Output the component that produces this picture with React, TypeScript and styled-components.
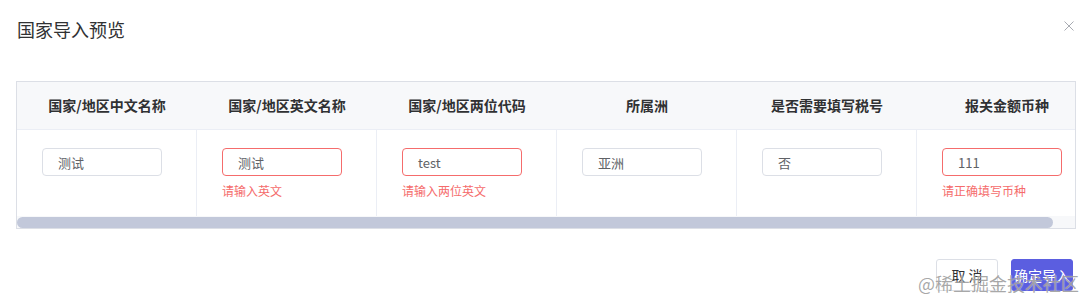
import React from "react";
import styled, { createGlobalStyle } from "styled-components";

const Global = createGlobalStyle`
  html, body { margin: 0; padding: 0; background: #fff; }
  body { font-family: "Noto Sans CJK SC", "Noto Sans", sans-serif; }
  * { box-sizing: border-box; }
`;

const Dialog = styled.div`
  position: relative;
  width: 1092px;
  height: 306px;
  padding: 0 16px;
  background: #fff;
  overflow: hidden;
`;

const Header = styled.div`
  height: 58px;
  display: flex;
  align-items: center;
  justify-content: space-between;
`;

const Title = styled.div`
  font-size: 18px;
  color: #303133;
  padding-left: 1px;
`;

const Close = styled.button`
  border: 0;
  background: none;
  padding: 0;
  margin-right: 2px;
  margin-top: -6px;
  width: 10px;
  height: 10px;
  display: flex;
  cursor: pointer;
`;

const TableWrap = styled.div`
  margin-top: 23px;
  border: 1px solid #dcdfe6;
  overflow: hidden;
`;

const Grid = styled.div`
  display: grid;
  grid-template-columns: repeat(6, 180px);
  width: 1080px;
`;

const HeadCell = styled.div`
  height: 48px;
  background: #f7f8fa;
  border-bottom: 1px solid #ebeef5;
  display: flex;
  align-items: center;
  justify-content: center;
  font-size: 14px;
  font-weight: 700;
  color: #303133;
  padding-bottom: 2px;
`;

const BodyCell = styled.div`
  height: 86px;
  padding: 18px 0 0 25px;
  border-right: 1px solid #ebeef5;
`;

const Input = styled.div<{ $error?: boolean }>`
  width: 120px;
  height: 28px;
  border: 1px solid ${(p) => (p.$error ? "#f56c6c" : "#dcdfe6")};
  border-radius: 4px;
  padding-left: 15px;
  display: flex;
  align-items: center;
  font-size: 13px;
  color: #606266;
`;

const ErrorText = styled.div`
  margin-top: 7px;
  font-size: 12px;
  line-height: 16px;
  color: #f56c6c;
`;

const ScrollTrack = styled.div`
  height: 12px;
  background: #f7f8fa;
  display: flex;
  align-items: center;
`;

const ScrollThumb = styled.div`
  height: 11px;
  border-radius: 6px;
  background: #c2c8da;
`;

const Footer = styled.div`
  margin-top: 30px;
  display: flex;
  justify-content: flex-end;
  gap: 13px;
  padding-right: 3px;
`;

const Button = styled.button<{ $primary?: boolean }>`
  height: 32px;
  width: 62px;
  border-radius: 3px;
  font-family: "Noto Sans CJK SC", sans-serif;
  font-size: 14px;
  padding: 0;
  cursor: pointer;
  border: 1px solid ${(p) => (p.$primary ? "#5b5ee0" : "#dcdfe6")};
  background: ${(p) => (p.$primary ? "#5b5ee0" : "#fff")};
  color: ${(p) => (p.$primary ? "#fff" : "#303133")};
`;

const Watermark = styled.div`
  position: absolute;
  left: 918px;
  top: 270px;
  font-size: 18px;
  line-height: 26px;
  color: rgba(110, 110, 110, 0.6);
  text-shadow: 0 0 1px rgba(255, 255, 255, 0.9);
  pointer-events: none;
  white-space: nowrap;
`;

const columns = [
  { head: "国家/地区中文名称", value: "测试" },
  { head: "国家/地区英文名称", value: "测试", error: "请输入英文" },
  { head: "国家/地区两位代码", value: "test", error: "请输入两位英文" },
  { head: "所属洲", value: "亚洲" },
  { head: "是否需要填写税号", value: "否" },
  { head: "报关金额币种", value: "111", error: "请正确填写币种" },
];

const VIEW = 1058;
const CONTENT = 1080;

export default function App() {
  const thumb = Math.round((VIEW / CONTENT) * VIEW);
  return (
    <Dialog>
      <Global />
      <Header>
        <Title>国家导入预览</Title>
        <Close aria-label="close">
          <svg width="10" height="10" viewBox="0 0 10 10">
            <path d="M0.5 0.5 L9.5 9.5 M9.5 0.5 L0.5 9.5" stroke="#a8abb2" strokeWidth="1" />
          </svg>
        </Close>
      </Header>
      <TableWrap>
        <Grid>
          {columns.map((c) => (
            <HeadCell key={"h" + c.head}>{c.head}</HeadCell>
          ))}
          {columns.map((c) => (
            <BodyCell key={"b" + c.head}>
              <Input $error={!!c.error}>{c.value}</Input>
              {c.error && <ErrorText>{c.error}</ErrorText>}
            </BodyCell>
          ))}
        </Grid>
        <ScrollTrack>
          <ScrollThumb style={{ width: thumb }} />
        </ScrollTrack>
      </TableWrap>
      <Footer>
        <Button>取 消</Button>
        <Button $primary>确定导入</Button>
      </Footer>
      <Watermark>@稀土掘金技术社区</Watermark>
    </Dialog>
  );
}
